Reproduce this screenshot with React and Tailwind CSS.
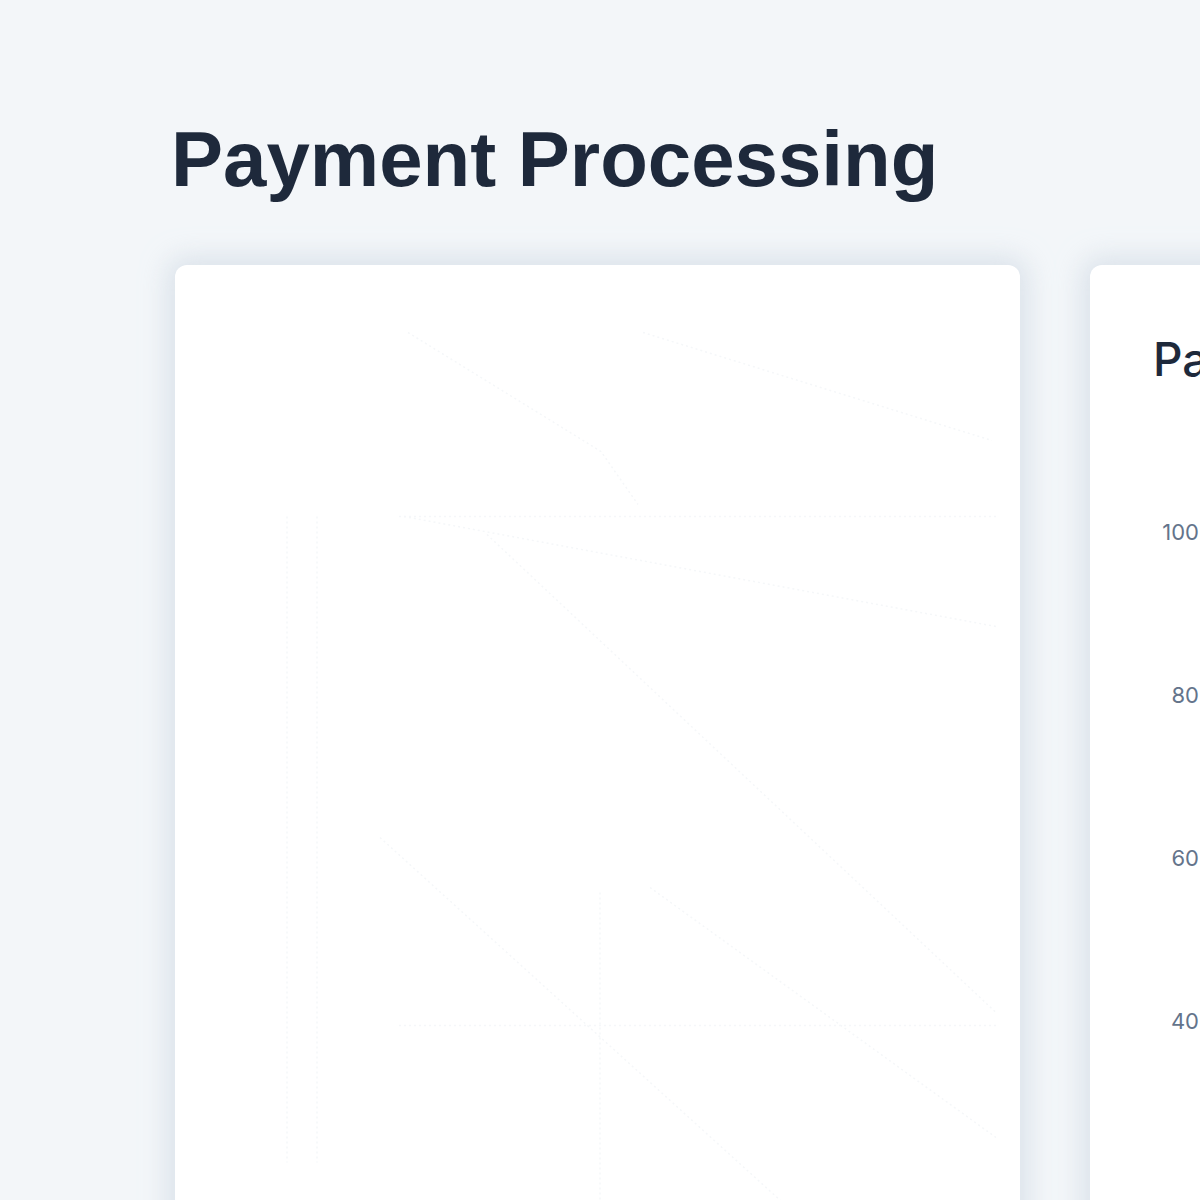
import React from 'react'

const ticks = ['100', '80', '60', '40']

function GhostChart() {
  // the chart in the first card is barely visible, just a faint trace of lines
  return (
    <svg className="w-full h-full" viewBox="0 0 845 935" fill="none">
      <g stroke="#f5f7f9" strokeWidth="1.5" strokeDasharray="2 3">
        <path d="M233 35 L426 154 L463 207" />
        <path d="M468 35 L817 143" />
        <path d="M224 219 L821 219" />
        <path d="M229 219 L821 329" />
        <path d="M312 237 L821 715" />
        <path d="M112 219 L112 865" />
        <path d="M142 219 L142 865" />
        <path d="M224 728 L821 728" />
        <path d="M205 540 L622 918" />
        <path d="M425 595 L425 935" />
        <path d="M475 590 L821 840" />
      </g>
    </svg>
  )
}

export default function App() {
  return (
    <div className="min-h-screen w-[1200px] h-[1200px] overflow-hidden bg-[#f3f6f9] font-['Inter',sans-serif]">
      <header className="pt-[120px] pl-[171px]">
        <h1 className="text-[78px] leading-none font-bold text-[#1e293b] font-['Liberation_Sans',Arial,sans-serif]">
          Payment Processing
        </h1>
      </header>

      <main className="mt-[67px] pl-[175px] flex gap-[70px]">
        <section className="w-[845px] h-[1000px] shrink-0 bg-white rounded-xl shadow-[0_0_26px_8px_rgba(203,213,225,0.6)]">
          <GhostChart />
        </section>

        <section className="w-[845px] h-[1000px] shrink-0 bg-white rounded-xl shadow-[0_0_26px_8px_rgba(203,213,225,0.6)] pt-[71px] pl-[63px]">
          <h2 className="text-[46px] leading-none font-medium text-[#1e293b] whitespace-nowrap">
            Payment Volume
          </h2>
          <div className="mt-[139px] w-[46px] flex flex-col gap-[142px] text-right">
            {ticks.map(t => (
              <span key={t} className="text-[22px] leading-none text-[#64748b] h-[21px] whitespace-nowrap">
                {t}
              </span>
            ))}
          </div>
        </section>
      </main>
    </div>
  )
}
